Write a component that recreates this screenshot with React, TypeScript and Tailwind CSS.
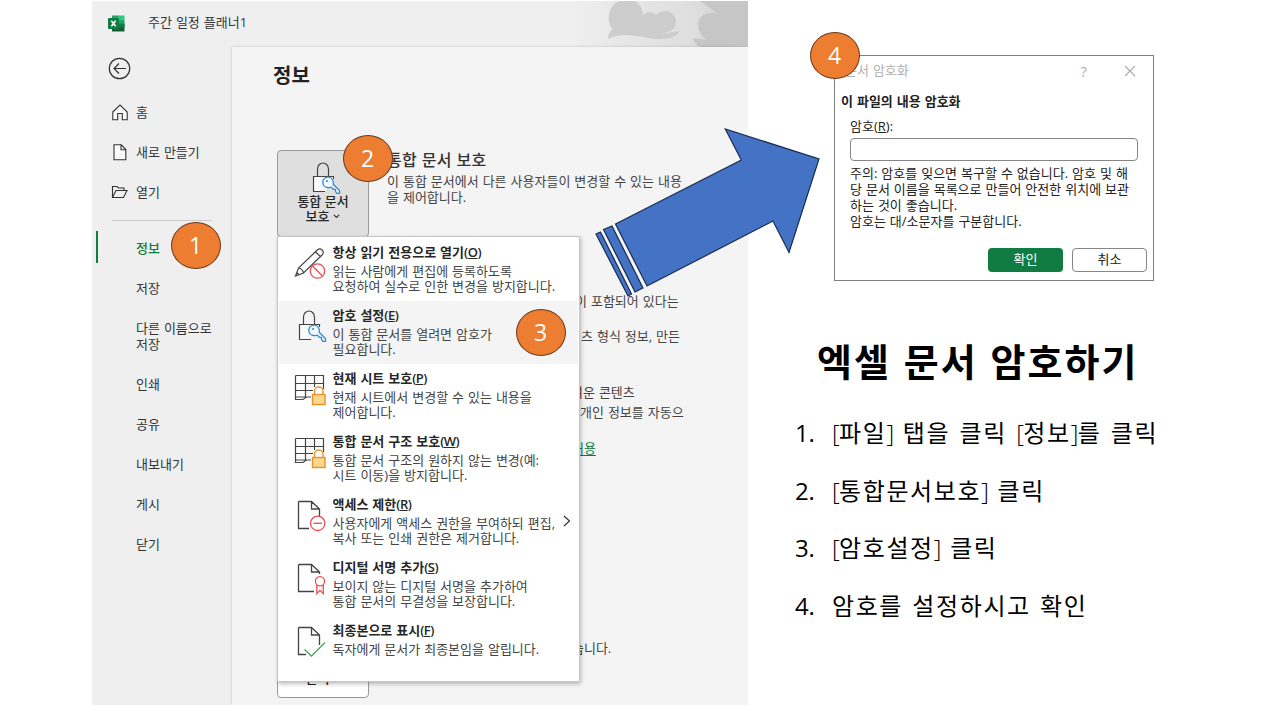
import type { ReactNode } from "react";

const ink = "#444444";

const DocBase = () => (
  <path d="M4.5 3.5H17.5L25.5 11V18M17.5 3.5V11H25.5M4.5 3.5V30.5H15" fill="none" stroke={ink} strokeWidth="1.3" />
);

const LockKey = () => (
  <>
    <path d="M17 30.5H5.5V15.5H25.5V18" fill="#fafafa" stroke={ink} strokeWidth="1.2" />
    <path d="M9.5 15.5V8A5.5 6 0 0 1 20.5 8V15.5" fill="none" stroke={ink} strokeWidth="1.2" />
    <path
      d="M25 20A5.2 5.2 0 1 0 19.5 26.5Q21.5 27 23 26L25.5 28.3H27.5V30.5L29 32.3H31.5V29.5L25.2 23.3Q25.8 21.5 25 20Z"
      fill="#f3f9fd"
      stroke="#2b8ad0"
      strokeWidth="1.3"
    />
    <circle cx="19" cy="20" r="1" fill="#2b8ad0" />
  </>
);

const SheetLock = () => (
  <>
    <path d="M1.5 3.5H29.5V17M1.5 3.5V27.5H9L12.5 25H17M1.5 11.5H29.5M1.5 18.5H19M1.5 25H12.5M11.5 3.5V25M20.5 3.5V15" fill="none" stroke={ink} strokeWidth="1.2" />
    <path d="M20.5 22.5V19A4.2 4 0 0 1 29 19V22.5" fill="none" stroke="#e8912d" strokeWidth="1.4" />
    <rect x="18.5" y="22.5" width="12.5" height="10" fill="#f9d88c" stroke="#e8912d" strokeWidth="1.4" />
  </>
);

const icons: Record<string, ReactNode> = {
  pencil: (
    <>
      <path d="M1.5 30L4.5 22L23.5 3.8Q26 2 28.3 4.2Q30.3 6.5 28.3 8.8L9.5 27Z M4.5 22Q8.5 22.5 9.5 27M21.5 5.8L26.5 10.7M1.5 30L5 28.6L3 26.5Z" fill="none" stroke={ink} strokeWidth="1.2" />
      <circle cx="23.5" cy="25" r="7.2" fill="#fff" stroke="#ee4b50" strokeWidth="1.3" />
      <path d="M18.5 20L28.5 30" stroke="#ee4b50" strokeWidth="1.3" />
    </>
  ),
  lock: <LockKey />,
  sheet: <SheetLock />,
  restrict: (
    <>
      <DocBase />
      <circle cx="23.7" cy="25.3" r="7.2" fill="#fff" stroke="#ee4b50" strokeWidth="1.3" />
      <path d="M19.5 25.3H28" stroke="#ee4b50" strokeWidth="1.3" />
    </>
  ),
  sign: (
    <>
      <path d="M4.5 3.5H17.5L25.5 11V13M17.5 3.5V11H25.5M4.5 3.5V30.5H20" fill="none" stroke={ink} strokeWidth="1.3" />
      <circle cx="26" cy="20.3" r="4.6" fill="#fff" stroke="#ee4b50" strokeWidth="1.3" />
      <path d="M22.8 24V32.5L26 29.3L29.3 32.5V24" fill="none" stroke="#ee4b50" strokeWidth="1.3" />
    </>
  ),
  final: (
    <>
      <path d="M4.5 3.5H17.5L25.5 11V21M17.5 3.5V11H25.5M4.5 3.5V30.5H12" fill="none" stroke={ink} strokeWidth="1.3" />
      <path d="M10.5 25.5L17.5 32L31 18.5" fill="none" stroke="#4ba564" strokeWidth="1.4" />
    </>
  ),
};

const menuItems = [
  { icon: "pencil", title: "항상 읽기 전용으로 열기", hotkey: "O", lines: ["읽는 사람에게 편집에 등록하도록", "요청하여 실수로 인한 변경을 방지합니다."] },
  { icon: "lock", title: "암호 설정", hotkey: "E", lines: ["이 통합 문서를 열려면 암호가", "필요합니다."], active: true },
  { icon: "sheet", title: "현재 시트 보호", hotkey: "P", lines: ["현재 시트에서 변경할 수 있는 내용을", "제어합니다."] },
  { icon: "sheet", title: "통합 문서 구조 보호", hotkey: "W", lines: ["통합 문서 구조의 원하지 않는 변경(예:", "시트 이동)을 방지합니다."] },
  { icon: "restrict", title: "액세스 제한", hotkey: "R", lines: ["사용자에게 액세스 권한을 부여하되 편집,", "복사 또는 인쇄 권한은 제거합니다."], more: true },
  { icon: "sign", title: "디지털 서명 추가", hotkey: "S", lines: ["보이지 않는 디지털 서명을 추가하여", "통합 문서의 무결성을 보장합니다."] },
  { icon: "final", title: "최종본으로 표시", hotkey: "F", lines: ["독자에게 문서가 최종본임을 알립니다."] },
];

const steps = [
  "[파일] 탭을 클릭 [정보]를 클릭",
  "[통합문서보호] 클릭",
  "[암호설정] 클릭",
  "암호를 설정하시고 확인",
];

function Badge({ n, className }: { n: number; className: string }) {
  return (
    <div
      className={`absolute z-30 flex h-[47px] w-[50px] items-center justify-center rounded-[50%] border border-[#6b3a1a] bg-[#ed7d31] pr-px pb-px text-[23px] leading-none text-white ${className}`}
    >
      {n}
    </div>
  );
}

function TitleBar() {
  return (
    <header className="relative flex h-[46px] shrink-0 items-center bg-[#efefef] pb-[2px]">
      <svg className="absolute top-0 right-0" width="176" height="46" viewBox="572 1 176 46">
        <defs>
          <linearGradient id="fade" x1="0" x2="1" y1="0" y2="0">
            <stop offset="0" stopColor="#efefef" />
            <stop offset="0.3" stopColor="#e7e7e7" />
            <stop offset="0.7" stopColor="#dedede" />
            <stop offset="1" stopColor="#c9c9c9" />
          </linearGradient>
        </defs>
        <rect x="572" y="1" width="176" height="46" fill="url(#fade)" />
        <path d="M608 39Q608 33 612.5 29.5C606 20 608 6 619 1H635Q642 5 643 15Q650 9 656 15Q664 8 672 13Q678 19 675 27Q672 32 660 34L680 31Q676 38 664 39C650 40 640 35 625 35Q616 35 608 39Z" fill="#cdcdcd" />
        <path d="M748 1V44Q738 47 728 47H700Q694 44 693 38L706 40Q695 30 699 20Q703 12 713 13Q722 15 724 18L700 1Z" fill="#c6c6c6" />
      </svg>
      <svg className="ml-[16px]" width="17" height="17" viewBox="0 0 17 17">
        <path d="M4 0.5H10.5V8.5H4Z" fill="#21a366" />
        <path d="M10 0.5H16.5V4.5H10Z" fill="#33c481" />
        <path d="M4 4.5H10.5V8.5H4Z" fill="#107c41" />
        <path d="M10 4.5H16.5V8.5H10Z" fill="#21a366" />
        <path d="M4 8.5H16.5V16.5H4Z" fill="#185c37" />
        <path d="M10 8.5H16.5V12.5H10Z" fill="#107c41" />
        <rect y="3" width="11" height="11" rx="1" fill="#107c41" />
        <path d="M3.3 5.7L7.7 11.3M7.7 5.7L3.3 11.3" stroke="#fff" strokeWidth="1.6" />
      </svg>
      <span className="ml-[23px] text-[#333]">주간 일정 플래너1</span>
    </header>
  );
}

function Sidebar() {
  return (
    <nav className="flex w-[140px] shrink-0 flex-col leading-4 text-[#333]">
      <svg className="mt-[10px] ml-[16px]" width="23" height="23" viewBox="0 0 23 23" fill="none" stroke="#333" strokeWidth="1.2">
        <circle cx="11.5" cy="11.5" r="10.2" />
        <path d="M18 11.5H6M11 6.5L6 11.5L11 16.5" />
      </svg>
      <div className="mt-[12px] flex h-10 items-center">
        <svg className="mr-[8px] ml-[20px]" width="16" height="17" viewBox="0 0 16 17" fill="#fafafa" stroke="#333" strokeWidth="1.1">
          <path d="M0.8 8L8 1L15.2 8V15.8H10.3V9.5H5.7V15.8H0.8Z" />
        </svg>
        홈
      </div>
      <div className="flex h-10 items-center">
        <svg className="mr-[9px] ml-[21px]" width="14" height="17" viewBox="0 0 14 17" fill="#fafafa" stroke="#333" strokeWidth="1.1">
          <path d="M1 0.8H8.3L12.8 5.5V15.8H1ZM8 0.8V5.7H12.8" />
        </svg>
        새로 만들기
      </div>
      <div className="flex h-10 items-center">
        <svg className="mr-[8px] ml-[19px]" width="17" height="14" viewBox="0 0 17 14" fill="none" stroke="#333" strokeWidth="1.1">
          <path d="M1.5 12.5V1.5H6L7.5 3H13V5.5M1.5 12.5L5 5.5H16L12.5 12.5Z" />
        </svg>
        열기
      </div>
      <div className="mt-[8px] ml-[20px] h-px w-[100px] bg-[#cbcbcb]" />
      <div className="mt-[7px] flex h-10 items-center">
        <span className="-mt-[3px] ml-[4px] h-8 w-[2px] bg-[#107c41]" />
        <span className="ml-[38px] pb-px font-medium text-[#107c41]">정보</span>
      </div>
      <div className="flex h-10 items-center pl-[44px]">저장</div>
      <div className="flex h-14 items-center pl-[44px]">
        다른 이름으로
        <br />
        저장
      </div>
      {["인쇄", "공유", "내보내기", "게시", "닫기"].map((label) => (
        <div key={label} className="flex h-10 items-center pl-[44px]">
          {label}
        </div>
      ))}
    </nav>
  );
}

function ProtectMenu() {
  return (
    <div className="absolute top-[189px] left-[45px] z-20 h-[446px] w-[303px] border border-[#c6c6c6] bg-white pt-px shadow-[1px_2px_4px_rgba(0,0,0,0.25)]">
      {menuItems.map((item) => (
        <div
          key={item.title}
          className={`mx-px flex h-[63px] pt-[6px] pl-[15px] ${item.active ? "bg-[#f4f4f4]" : ""}`}
        >
          <svg className="mt-[2px] shrink-0" width="34" height="34" viewBox="0 0 34 34">
            {icons[item.icon]}
          </svg>
          <div className="ml-[4.5px] whitespace-nowrap">
            <p className="leading-4 font-semibold text-[#262626]">
              {item.title}
              <span className="tracking-[-0.5px]">
                (<u className="underline-offset-1">{item.hotkey}</u>)
              </span>
            </p>
            <div className="mt-[4px] leading-[15px] text-[#444]">
              {item.lines.map((line) => (
                <p key={line}>{line}</p>
              ))}
            </div>
          </div>
          {item.more && (
            <svg className="mt-[19px] ml-[7px]" width="9" height="12" viewBox="0 0 9 12" fill="none" stroke="#333" strokeWidth="1.2">
              <path d="M2 1L7.5 6L2 11" />
            </svg>
          )}
        </div>
      ))}
    </div>
  );
}

function Chevron() {
  return (
    <svg className="mb-[2px] ml-1 inline-block" width="7" height="5" viewBox="0 0 7 5" fill="none" stroke="#333" strokeWidth="1.2">
      <path d="M0.8 0.8L3.5 3.5L6.2 0.8" />
    </svg>
  );
}

function InfoPanel() {
  return (
    <main className="relative flex-1 bg-[#f4f4f4] whitespace-nowrap text-[#444] shadow-[0_0_3px_rgba(0,0,0,0.18)]">
      <h1 className="pt-[16px] pl-[41px] text-[20px] leading-[26px] font-bold text-[#222]">정보</h1>
      <section className="mt-[61px] flex pl-[45px]">
        <button className="flex h-[87px] w-[92px] flex-col items-center rounded-[4px] border border-[#999] bg-[#dfdfdf] pt-[9px] leading-[15px] font-medium text-[#262626]">
          <svg className="ml-[4px]" width="34" height="34" viewBox="0 -1 34 34">
            <LockKey />
          </svg>
          <span>통합 문서</span>
          <span>
            보호
            <Chevron />
          </span>
        </button>
        <div className="ml-[18px]">
          <h2 className="text-[16px] leading-5 font-medium tracking-[0.2px] text-[#333]">통합 문서 보호</h2>
          <p className="mt-[3px] leading-4">
            이 통합 문서에서 다른 사용자들이 변경할 수 있는 내용
            <br />을 제어합니다.
          </p>
        </div>
      </section>
      <div className="flex flex-col pt-[56px] leading-4">
        <p className="pl-[343px]">이 포함되어 있다는</p>
        <p className="mt-[19px] pl-[349px]">츠 형식 정보, 만든</p>
        <p className="mt-[40px] pl-[339px]">려운 콘텐츠</p>
        <p className="mt-[4px] pl-[348px]">개인 정보를 자동으</p>
        <p className="mt-[20px] pl-[340px] text-[#107c41] underline underline-offset-2">허용</p>
        <p className="mt-[184px] pl-[328px]">있습니다.</p>
      </div>
      <button className="-mt-[45px] ml-[45px] flex h-[87px] w-[92px] items-end justify-center rounded-[4px] border border-[#999] bg-white pb-[11px] leading-4 font-medium text-[#262626]">
        <span>
          관리
          <Chevron />
        </span>
      </button>
      <ProtectMenu />
    </main>
  );
}

function EncryptDialog() {
  return (
    <div className="mt-[55px] ml-[86px] h-[226px] w-[320px] border border-[#7f7f7f] bg-white text-[#222]">
      <div className="flex h-[30px] items-center text-[#b0b0b0]">
        <span className="ml-[10px]">문서 암호화</span>
        <span className="ml-auto text-[15px]">?</span>
        <svg className="mr-[17px] ml-[37px]" width="12" height="12" viewBox="0 0 12 12" stroke="#aaa" strokeWidth="1.1">
          <path d="M1 1L11 11M11 1L1 11" />
        </svg>
      </div>
      <h3 className="mt-[7px] pl-[6px] leading-4 font-semibold">이 파일의 내용 암호화</h3>
      <div className="px-[15px]">
        <label className="mt-[9px] block leading-4">
          암호(<u className="underline-offset-1">R</u>):
        </label>
        <div className="mt-[4px] h-[23px] rounded-[4px] border border-[#868686]" />
        <p className="mt-[4px] leading-4 whitespace-nowrap">
          주의: 암호를 잊으면 복구할 수 없습니다. 암호 및 해
          <br />
          당 문서 이름을 목록으로 만들어 안전한 위치에 보관
          <br />
          하는 것이 좋습니다.
          <br />
          암호는 대/소문자를 구분합니다.
        </p>
      </div>
      <div className="mt-[19px] flex justify-end gap-[9px] pr-[6px]">
        <button className="h-6 w-[75px] rounded-[4px] bg-[#107c41] text-white">확인</button>
        <button className="h-6 w-[75px] rounded-[4px] border border-[#868686]">취소</button>
      </div>
    </div>
  );
}

// square brackets are set lighter and tighter than the Hangul around them
function StepText({ text }: { text: string }) {
  return (
    <span className="whitespace-pre">
      {text.split(/([[\]])/).map((part, i) =>
        part === "[" || part === "]" ? (
          <span key={i} className="font-light tracking-[-0.6px]">
            {part}
          </span>
        ) : (
          part
        )
      )}
    </span>
  );
}

export default function App() {
  return (
    <div className="relative flex h-[720px] w-[1280px] overflow-hidden bg-white font-['Open_Sans','Noto_Sans_CJK_KR',sans-serif] text-[13px] [word-spacing:0.6px]">
      <div className="mt-px ml-[92px] flex h-[704px] w-[656px] shrink-0 flex-col overflow-hidden bg-[#efefef]">
        <TitleBar />
        <div className="flex flex-1">
          <Sidebar />
          <InfoPanel />
        </div>
      </div>

      <div className="flex-1">
        <EncryptDialog />
        <h2 className="mt-[52px] pl-[69px] text-[38px] leading-[56px] font-bold tracking-[2px] whitespace-nowrap text-black [word-spacing:1px]">
          엑셀 문서 암호하기
        </h2>
        <ol className="mt-[15px] pl-[47px] text-[24px] tracking-[1.6px] whitespace-nowrap text-black [word-spacing:1.5px]">
          {steps.map((step, i) => (
            <li key={step} className="flex h-[57.7px] items-center">
              <span className="w-[37px] tracking-[-0.3px]">{i + 1}.</span>
              <StepText text={step} />
            </li>
          ))}
        </ol>
      </div>

      <svg className="absolute top-[120px] left-[590px] z-20" width="236" height="184" viewBox="590 120 236 184" fill="#4472c4" stroke="#172c51" strokeWidth="1.2">
        <path d="M615.5 224L741.3 160L725.3 129L819 159L789 252.5L773 221L647 286Z" />
        <path d="M603.5 229.5L612 226L643 288L635 292Z" />
        <path d="M596 234L600.5 232L631.5 294L628 296Z" />
      </svg>

      <Badge n={1} className="top-[222px] left-[171px]" />
      <Badge n={2} className="top-[135px] left-[343px]" />
      <Badge n={3} className="top-[309px] left-[516px]" />
      <Badge n={4} className="top-[32px] left-[810px]" />
    </div>
  );
}
